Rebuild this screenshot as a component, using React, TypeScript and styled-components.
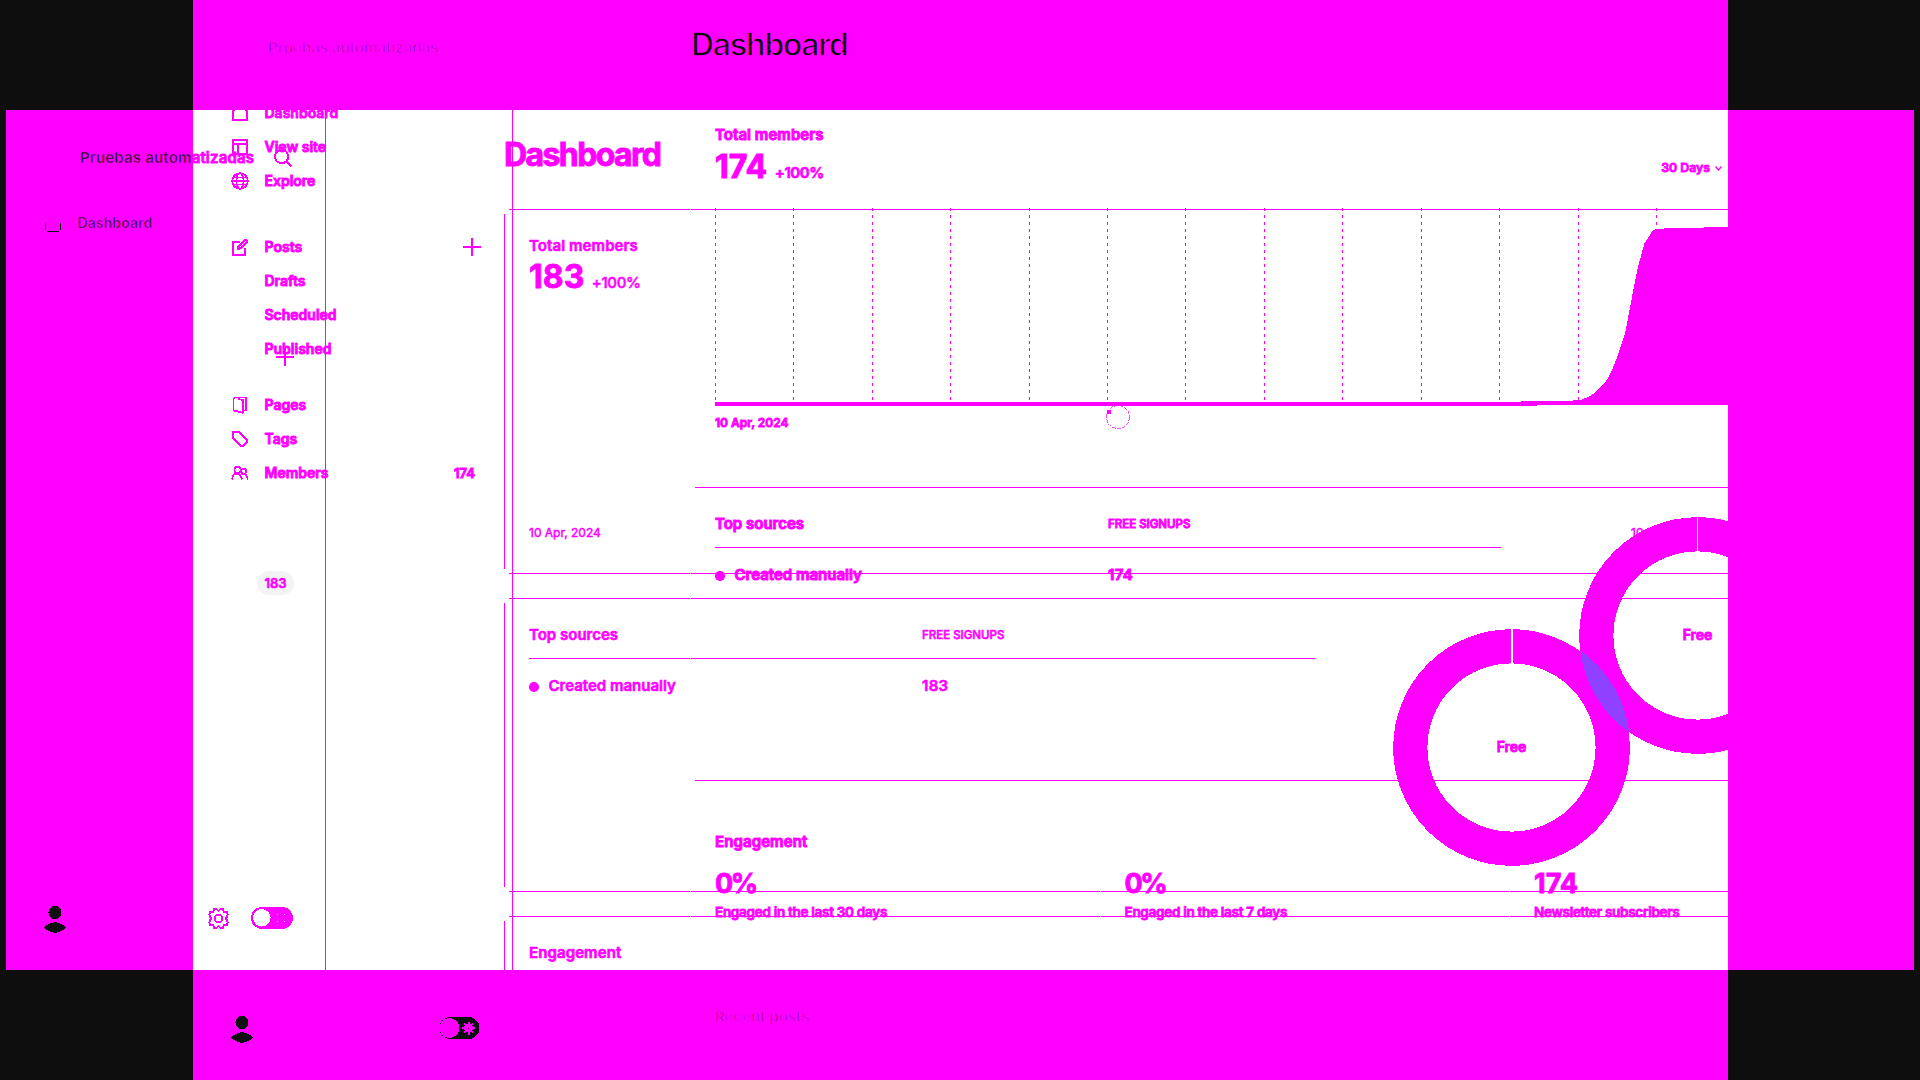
import React from "react";
import styled, { createGlobalStyle } from "styled-components";

const PINK = "#ff00ff";
const INK = "#0e0e0e";

const GlobalStyle = createGlobalStyle`
  html, body { margin: 0; background: ${INK}; overflow: hidden; }
  *, *::before, *::after { box-sizing: border-box; }
  svg { display: block; flex: none; }
`;

const Stage = styled.div`
  position: relative;
  width: 1920px;
  height: 1080px;
  overflow: hidden;
  background: ${INK};
  color: ${PINK};
  font-family: Inter, "Liberation Sans", sans-serif;
`;

const Plate = styled.div<{ $x: number; $y: number; $w: number; $h: number; $fill?: string }>`
  position: absolute;
  left: ${(p) => p.$x}px;
  top: ${(p) => p.$y}px;
  width: ${(p) => p.$w}px;
  height: ${(p) => p.$h}px;
  background: ${(p) => p.$fill ?? "transparent"};
`;

const Window = styled(Plate)`
  display: flex;
  overflow: hidden;
`;

const Label = styled.span<{
  $size?: number;
  $weight?: number;
  $track?: number;
  $stroke?: number;
  $ink?: boolean;
  $line?: number;
}>`
  font-size: ${(p) => p.$size ?? 14}px;
  font-weight: ${(p) => p.$weight ?? 600};
  letter-spacing: ${(p) => p.$track ?? 0}px;
  line-height: ${(p) => p.$line ?? 20}px;
  white-space: nowrap;
  color: ${(p) => (p.$ink ? INK : PINK)};
  -webkit-text-stroke: ${(p) => p.$stroke ?? 0.6}px ${PINK};
`;

/* Sidebar */
const SidebarBox = styled.aside`
  display: flex;
  flex-direction: column;
  flex: none;
  width: 320px;
  border-right: 1px solid ${PINK};
`;
const Brand = styled.header<{ $inset: number }>`
  display: flex;
  align-items: center;
  justify-content: space-between;
  height: 95.5px;
  padding: 0 33px 0 ${(p) => p.$inset}px;
`;
const NavGroup = styled.nav<{ $gap?: number }>`
  display: flex;
  flex-direction: column;
  margin-top: ${(p) => p.$gap ?? 0}px;
`;
const NavRow = styled.div`
  display: grid;
  grid-template-columns: 18px 1fr auto;
  column-gap: 15.5px;
  align-items: center;
  height: 34px;
  padding: 0 31px 0 38px;
`;
const Count = styled.span<{ $filled?: boolean }>`
  display: flex;
  align-items: center;
  justify-content: center;
  width: 37px;
  height: 24px;
  margin-right: ${(p) => (p.$filled ? 0 : -2)}px;
  border-radius: 12px;
  background: ${(p) => (p.$filled ? "#f1f3f4" : "transparent")};
`;
const SideFooter = styled.footer`
  display: flex;
  align-items: center;
  height: 104px;
  margin-top: auto;
  padding: 0 32px 0 38px;
`;
const Push = styled.span`
  margin-left: auto;
  display: flex;
  align-items: center;
  gap: 22px;
`;

/* Main column */
const MainBox = styled.main<{ $inset: number }>`
  display: flex;
  flex-direction: column;
  flex: 1;
  min-width: 0;
  padding-left: ${(p) => p.$inset}px;
`;
const PageHead = styled.header<{ $h: number; $pad?: number; $lift?: number }>`
  display: flex;
  align-items: center;
  flex: none;
  height: ${(p) => p.$h}px;
  padding: 0 0 ${(p) => p.$lift ?? 0}px ${(p) => p.$pad ?? 0}px;
`;
/* The card edge is one white pixel, drawn between $from and $to */
const OpenCard = styled.section<{ $h: number; $top: number; $from?: number; $to?: number }>`
  display: flex;
  flex-direction: column;
  flex: none;
  height: ${(p) => p.$h}px;
  padding: ${(p) => p.$top}px 0 0 25px;
  background: linear-gradient(#fff, #fff) 0 ${(p) => p.$from ?? 0}px / 1px
    ${(p) => (p.$to ?? p.$h) - (p.$from ?? 0)}px no-repeat;
`;
const Divider = styled.hr`
  flex: none;
  width: 100%;
  height: 1px;
  margin: 0 0 0 5px;
  border: 0;
  background: ${PINK};
`;
const OutlineCard = styled.section<{ $h: number; $top: number }>`
  display: flex;
  flex-direction: column;
  flex: none;
  height: ${(p) => p.$h}px;
  margin-bottom: 24px;
  padding: ${(p) => p.$top}px 0 0 25px;
  background:
    linear-gradient(${PINK}, ${PINK}) 5px 0 / 100% 1px no-repeat,
    linear-gradient(${PINK}, ${PINK}) 5px 100% / 100% 1px no-repeat,
    linear-gradient(${PINK}, ${PINK}) 0 50% / 1px calc(100% - 10px) no-repeat;
`;
const ValueRow = styled.div<{ $gap: number }>`
  display: flex;
  align-items: baseline;
  flex: none;
  height: 32px;
  margin-top: ${(p) => p.$gap}px;
  padding-right: 6px;
`;
const Value = styled(Label)`
  margin-right: 7.5px;
`;
const Period = styled.span`
  display: flex;
  align-items: center;
  align-self: center;
  gap: 5px;
  margin-left: auto;
  padding-top: 2px;
`;
const ChartArea = styled.div`
  margin-top: 23px;
`;
const DateRow = styled.div<{ $gap: number }>`
  display: grid;
  grid-template-columns: 1102px auto;
  justify-content: start;
  margin-top: ${(p) => p.$gap}px;
`;
const Sources = styled.div`
  display: grid;
  grid-template-columns: 786px 236px;
  column-gap: 78px;
`;
const TableHead = styled.div`
  display: grid;
  grid-template-columns: 393px 1fr;
  align-items: center;
  height: 49px;
  padding-top: 2px;
  border-bottom: 1px solid ${PINK};
`;
const TableRow = styled.div`
  display: grid;
  grid-template-columns: 393px 1fr;
  align-items: center;
  height: 54px;
`;
const SourceName = styled.span`
  display: flex;
  align-items: center;
  gap: 10px;
`;
const Bullet = styled.i`
  width: 9.5px;
  height: 9.5px;
  margin-top: 2px;
  border-radius: 50%;
  background: ${PINK};
`;
const DonutBox = styled.div<{ $top: number }>`
  display: grid;
  place-items: center;
  width: 237px;
  height: 237px;
  margin-top: ${(p) => p.$top}px;
  & > * { grid-area: 1 / 1; }
  & > span { padding-bottom: 2px; }
`;
const Stats = styled.div`
  display: grid;
  grid-template-columns: repeat(3, 409.5px);
  flex: none;
  margin-top: 16px;
  margin-left: -25px;
`;
const Stat = styled.div`
  display: flex;
  flex-direction: column;
  gap: 2px;
  padding-left: 24px;
  height: 70px;
  border-left: 1px solid #fff;
`;

/* Icons */
const Icon = ({ children, size = 18, sw = 2 }: { children: React.ReactNode; size?: number; sw?: number }) => (
  <svg width={size} height={size} viewBox="0 0 18 18" fill="none" stroke={PINK} strokeWidth={sw} shapeRendering="crispEdges">
    {children}
  </svg>
);
const HomeIcon = () => <Icon><path d="M2 6.5V16H16V6.5L9 1Z" /></Icon>;
const SiteIcon = () => <Icon><path d="M2 2H16V16H2ZM2 6H16M7 6V16" /></Icon>;
const GlobeIcon = () => (
  <Icon sw={1.8}><circle cx="9" cy="9" r="7.8" /><ellipse cx="9" cy="9" rx="3.6" ry="7.8" /><path d="M1.2 9H16.8M2.5 5.5H15.5M2.5 12.5H15.5" /></Icon>
);
const EditIcon = () => <Icon><path d="M9 4H2V16.5H13.5V9.5M6.8 11L7.4 8.2L13.6 2Q16.3 1.2 15.8 3.8L9.6 10.2Z" /></Icon>;
const PagesIcon = () => <Icon sw={1.8}><path d="M11.5 16.8L2.4 14.3V3L4 1.5H15V14.5H12.5ZM12 16.5V4L7 3" /></Icon>;
const TagIcon = () => <Icon><path d="M2 2H8L16 10V12L12 16.2H10L2 8Z" /></Icon>;
const MembersIcon = () => (
  <Icon sw={1.7}><circle cx="6.5" cy="6" r="3.2" /><circle cx="12.8" cy="7.2" r="2.4" /><path d="M1 15.5Q1.5 9.6 6 9.6Q9.8 10 11 15.5M11.4 10Q16 9.2 16.8 15.5" /></Icon>
);
const PlusIcon = () => <Icon><path d="M9 0V18M0 9H18" /></Icon>;
const SearchIcon = () => <Icon sw={1.8}><circle cx="7.6" cy="7.6" r="6.6" /><path d="M12.2 12.4L17.4 17.6" /></Icon>;
const GearIcon = () => (
  <svg width="21" height="21" viewBox="-10.5 -10.5 21 21" fill="none" stroke={PINK} strokeWidth="1.9" shapeRendering="crispEdges">
    <circle r="3.8" />
    <path d="M0 -7.6L1.7 -9.3H4.4L5.3 -6.6L8.4 -6.2L9.3 -3.8L7.5 0L9.3 3.8L8.4 6.2L5.3 6.6L4.4 9.3H1.7L0 7.6L-1.7 9.3H-4.4L-5.3 6.6L-8.4 6.2L-9.3 3.8L-7.5 0L-9.3 -3.8L-8.4 -6.2L-5.3 -6.6L-4.4 -9.3H-1.7Z" />
  </svg>
);
const AvatarIcon = () => (
  <svg width="22" height="30" viewBox="0 -3 22 30" fill={INK} shapeRendering="crispEdges">
    <circle cx="11" cy="6.5" r="6.5" />
    <path d="M0 21.5Q5 16.3 11 16.3T22 21.5Q17 26.7 11 26.7T0 21.5Z" />
  </svg>
);
const ToggleLight = () => (
  <svg width="42" height="22" viewBox="0 0 42 22" shapeRendering="crispEdges">
    <rect width="42" height="22" rx="11" fill={PINK} />
    <circle cx="10.8" cy="10.8" r="8.8" fill="#fff" />
    <path d="M26 7h1v1h-1zM33 7h1v1h-1zM26 14h1v1h-1zM33 14h1v1h-1z" fill="#fff" />
  </svg>
);
const ToggleDark = () => (
  <svg width="41" height="22" viewBox="0 0 41 22" shapeRendering="crispEdges">
    <rect x=".5" width="40" height="22" rx="11" fill={INK} />
    <circle cx="10.4" cy="11" r="10" fill={PINK} />
    <path d="M29.5 4.5V17.5M23 11H36M25 6.5L34 15.5M34 6.5L25 15.5" stroke={PINK} strokeWidth="2" />
    <circle cx="29.5" cy="11" r="4.4" fill={PINK} />
    <rect x="29" y="10.5" width="1" height="1" fill={INK} />
  </svg>
);

const Donut = ({ split, top }: { split: number; top: number }) => (
  <DonutBox $top={top}>
    <svg width="237" height="237" viewBox="0 0 237 237" shapeRendering="crispEdges">
      <circle cx="118.5" cy="118.5" r="101.2" fill="none" stroke={PINK} strokeWidth="34.2" />
      <rect x={118.5 - split / 2} y="0" width={split} height="36" fill="#fff" />
    </svg>
    <Label $stroke={0.9}>Free</Label>
  </DonutBox>
);

const SourcesPanel = ({ total, stroke, split, donutTop }: { total: string; stroke: number; split: number; donutTop: number }) => (
  <Sources>
    <div>
      <TableHead>
        <Label $size={15} $stroke={stroke}>Top sources</Label>
        <Label $size={11.5} $weight={500} $stroke={stroke}>FREE SIGNUPS</Label>
      </TableHead>
      <TableRow>
        <SourceName><Bullet /><Label $size={15} $stroke={stroke}>Created manually</Label></SourceName>
        <Label $size={15} $track={0.3} $stroke={stroke}>{total}</Label>
      </TableRow>
    </div>
    <Donut split={split} top={donutTop} />
  </Sources>
);

const GRID = Array.from({ length: 13 }, (_, i) => Math.floor(715.4 + i * 78.42) + 0.5);

const MembersChart = () => (
  <svg width="1013" height="202" viewBox="715 206 1013 202" overflow="visible" shapeRendering="crispEdges">
    {GRID.map((x) => (
      <line key={x} x1={x} x2={x} y1="208" y2="402" stroke={PINK} strokeDasharray="3 4" />
    ))}
    <rect x="715" y="402" width="822" height="4" fill={PINK} />
    <path
      d="M1500 402L1525 401.4L1573 400.5L1582 399.5Q1592 396 1598 390L1604.5 383Q1610 376 1616 360L1625 334L1632 297L1638 267L1644.5 243L1650 235Q1652 230 1655.5 229.5L1666 228.3L1728 227V405H1500Z"
      fill={PINK}
    />
    <circle cx="1118" cy="417" r="11.5" fill="none" stroke={PINK} strokeWidth="0.7" strokeDasharray="4 1" />
    <rect x="1107" y="410" width="4" height="4" fill={PINK} />
  </svg>
);

const STATS = [
  { value: "0%", track: -2.4, note: "Engaged in the last 30 days" },
  { value: "0%", track: -2.4, note: "Engaged in the last 7 days" },
  { value: "174", track: 0, note: "Newsletter subscribers" },
];

const NAV: [string, React.ReactNode][][] = [
  [["Dashboard", <HomeIcon />], ["View site", <SiteIcon />], ["Explore", <GlobeIcon />]],
  [["Posts", <EditIcon />], ["Drafts", <span />], ["Scheduled", <span />], ["Published", <span />]],
  [["Pages", <PagesIcon />], ["Tags", <TagIcon />], ["Members", <MembersIcon />]],
];
const GAPS = [0, 32.5, 22];

const TallWindow = () => (
  <Window $x={193} $y={0} $w={1535} $h={1080}>
    <SidebarBox>
      <Brand $inset={75}>
        <Label $ink $size={15} $weight={600} $stroke={1.4}>Pruebas automatizadas</Label>
      </Brand>
      {NAV.map((group, g) => (
        <NavGroup key={g} $gap={GAPS[g]}>
          {group.map(([name, icon]) => (
            <NavRow key={name}>
              {icon}
              <Label $stroke={0.9}>{name}</Label>
              {name === "Posts" && <PlusIcon />}
              {name === "Members" && <Count><Label $size={13} $stroke={1}>174</Label></Count>}
            </NavRow>
          ))}
        </NavGroup>
      ))}
      <SideFooter>
        <AvatarIcon />
        <Push><ToggleDark /></Push>
      </SideFooter>
    </SidebarBox>
    <MainBox $inset={177}>
      <PageHead $h={89} $pad={1}>
        <Label $ink $size={32} $weight={700} $track={-1.6} $stroke={1.6}>Dashboard</Label>
      </PageHead>
      <OpenCard $h={398} $top={36} $from={21}>
        <Label $size={15} $track={0.05} $stroke={1}>Total members</Label>
        <ValueRow $gap={6}>
          <Value $size={32} $weight={700} $line={32} $stroke={1}>174</Value>
          <Label $size={15} $track={-0.4} $stroke={0.7}>+100%</Label>
          <Period>
            <Label $size={12.3} $stroke={0.8}>30 Days</Label>
            <svg width="7" height="5" viewBox="0 0 7 5" fill="none" stroke={PINK} strokeWidth="1.3"><path d="M.5 .5L3.5 4L6.5 .5" /></svg>
          </Period>
        </ValueRow>
        <ChartArea><MembersChart /></ChartArea>
        <DateRow $gap={5}><Label $size={12} $stroke={0.9}>10 Apr, 2024</Label></DateRow>
      </OpenCard>
      <Divider />
      <OpenCard $h={292} $top={11}>
        <SourcesPanel total="174" stroke={1} split={1} donutTop={18} />
      </OpenCard>
      <Divider />
      <OpenCard $h={299} $top={51} $to={189}>
        <Label $size={15} $track={0.1} $stroke={1}>Engagement</Label>
        <Stats>
          {STATS.map(({ value, track, note }) => (
            <Stat key={note}>
              <Label $size={27} $weight={700} $track={track} $line={32} $stroke={0.8}>{value}</Label>
              <Label $size={13.5} $track={-0.28} $stroke={0.8}>{note}</Label>
            </Stat>
          ))}
        </Stats>
        <PageHead $h={158}><Label $ink $size={15} $stroke={1.4}>Recent posts</Label></PageHead>
      </OpenCard>
    </MainBox>
  </Window>
);

const WideWindow = () => (
  <Window $x={6} $y={110} $w={1896} $h={860}>
    <SidebarBox>
      <Brand $inset={74}>
        <span>
          <Label $ink $size={15} $track={0.17} $stroke={0.5}>Pruebas autom</Label>
          <Label $size={15} $track={0.17} $stroke={0.8}>atizadas</Label>
        </span>
        <SearchIcon />
      </Brand>
      <NavGroup>
        <NavRow>
          <svg width="18" height="18" viewBox="0 0 18 18" shapeRendering="crispEdges" fill={INK}>
            <path d="M1 9h1v7h-1zM16 9h1v7h-1zM3 17h12v1h-12z" />
          </svg>
          <Label $ink $track={0.1} $stroke={0.6}>Dashboard</Label>
        </NavRow>
      </NavGroup>
      <NavGroup $gap={100}>
        <NavRow><span /><span /><PlusIcon /></NavRow>
      </NavGroup>
      <NavGroup $gap={192}>
        <NavRow><span /><span /><Count $filled><Label $size={13} $stroke={0.6}>183</Label></Count></NavRow>
      </NavGroup>
      <SideFooter>
        <AvatarIcon />
        <Push><GearIcon /><ToggleLight /></Push>
      </SideFooter>
    </SidebarBox>
    <MainBox $inset={178}>
      <PageHead $h={99} $lift={10}>
        <Label $size={32} $weight={700} $track={-1.6} $stroke={0.9}>Dashboard</Label>
      </PageHead>
      <OutlineCard $h={365} $top={27}>
        <Label $size={15} $track={0.08} $stroke={0.6}>Total members</Label>
        <ValueRow $gap={5}>
          <Value $size={32} $weight={700} $line={32} $stroke={0.8}>183</Value>
          <Label $size={15} $weight={500} $track={-0.35} $stroke={0.5}>+100%</Label>
        </ValueRow>
        <DateRow $gap={230}>
          <Label $size={12} $weight={400} $stroke={0.5}>10 Apr, 2024</Label>
          <Label $size={12} $weight={400} $stroke={0.5}>10 May, 2024</Label>
        </DateRow>
      </OutlineCard>
      <OutlineCard $h={294} $top={12}>
        <SourcesPanel total="183" stroke={0.6} split={2} donutTop={19} />
      </OutlineCard>
      <OutlineCard $h={294} $top={27}>
        <Label $size={15} $track={0.1} $stroke={0.7}>Engagement</Label>
      </OutlineCard>
    </MainBox>
  </Window>
);

const RingLens = styled.svg`
  position: absolute;
  left: 1570px;
  top: 640px;
`;

export default function App() {
  return (
    <>
      <GlobalStyle />
      <Stage>
        <Plate $x={193} $y={0} $w={1535} $h={1080} $fill={PINK} />
        <Plate $x={6} $y={110} $w={1908} $h={860} $fill={PINK} />
        <Plate $x={193} $y={110} $w={1535} $h={860} $fill="#fff" />
        <WideWindow />
        <TallWindow />
        <RingLens width="70" height="100" viewBox="1570 640 70 100" shapeRendering="crispEdges">
          <path d="M1580.3 650.5A118.3 118.3 0 0 1 1629.3 732.5A118.3 118.3 0 0 1 1580.3 650.5Z" fill="#9040ff" />
        </RingLens>
      </Stage>
    </>
  );
}
